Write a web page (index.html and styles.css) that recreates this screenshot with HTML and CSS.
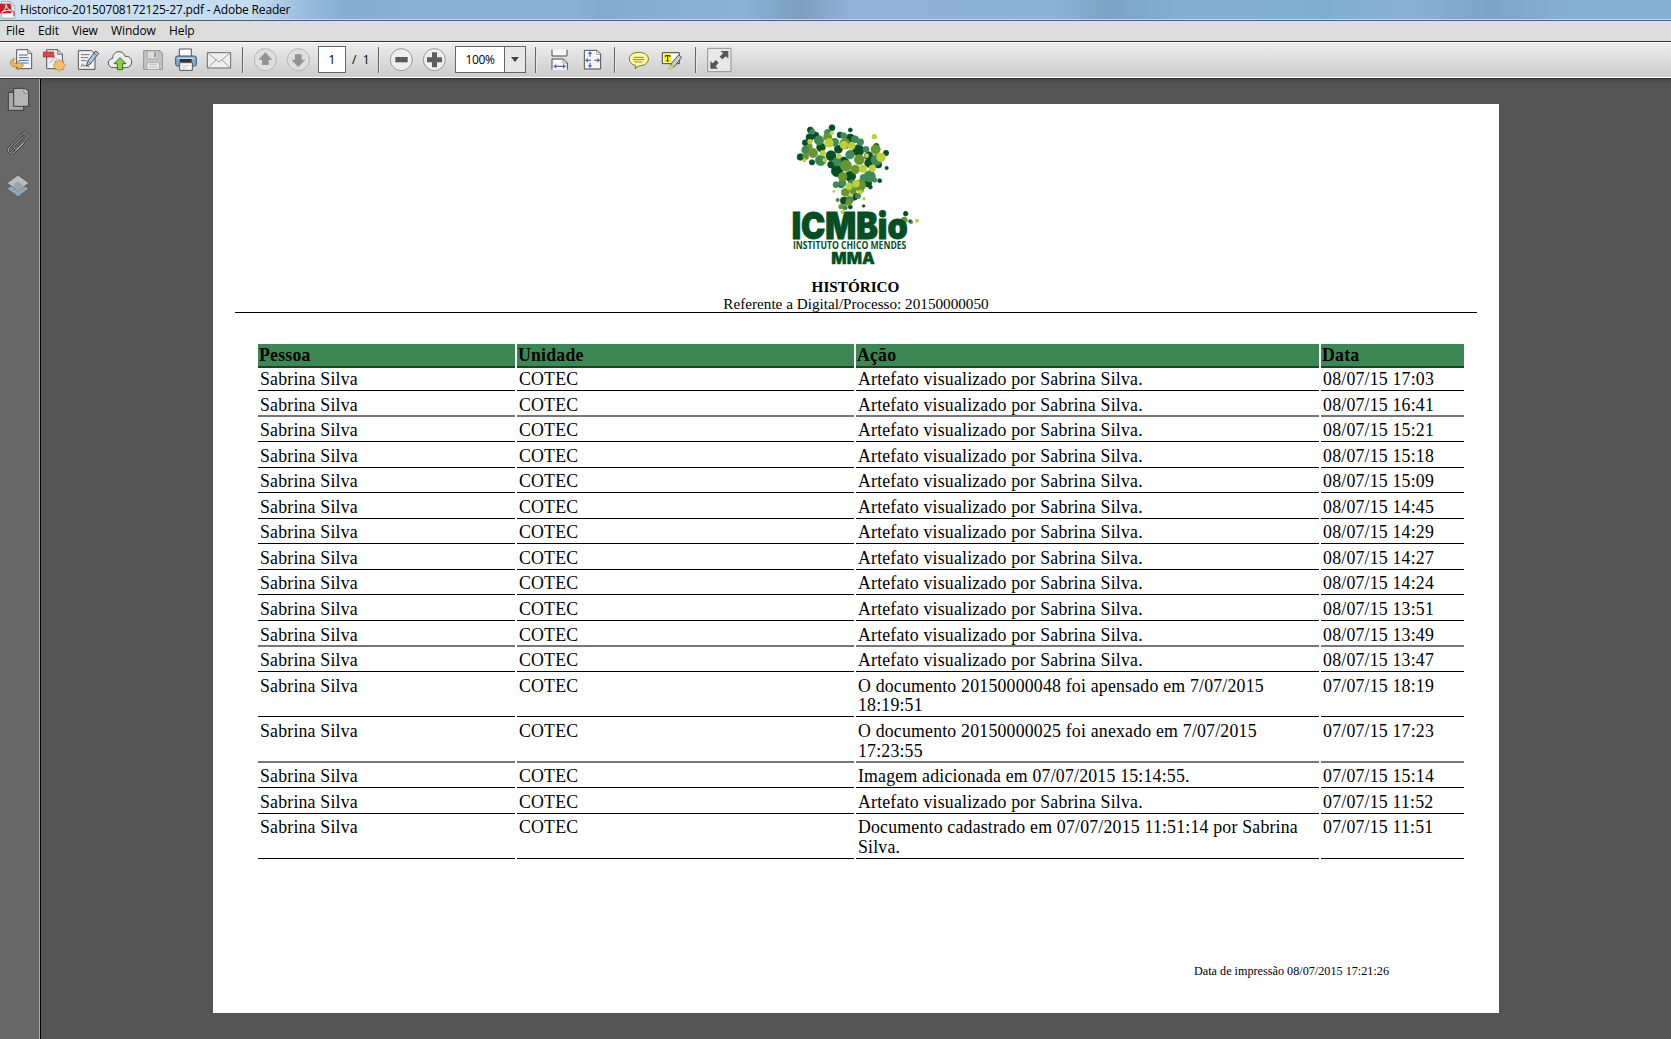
FILE: index.html
```html
<!DOCTYPE html>
<html lang="pt-BR">
<head>
<meta charset="utf-8">
<title>Historico-20150708172125-27.pdf - Adobe Reader</title>
<link rel="stylesheet" href="styles.css">
</head>
<body>
<header class="titlebar">
  <svg class="app-icon" width="16" height="18" viewBox="0 0 48 54"><path d="M4 2h28l12 12v38H4z" fill="#f6f2f2" stroke="#8b8b8b" stroke-width="2"/><path d="M0 8h34v29H0z" fill="#c4202a"/><path d="M32 2v12h12z" fill="#ddd" stroke="#888"/><path d="M5 34c9-4 14-14 13-23 3 11 9 17 17 18-12-2-22 0-30 5z" fill="none" stroke="#fff" stroke-width="3"/><path d="M34 28l8 5v12" fill="none" stroke="#c4202a" stroke-width="3"/></svg>
  <span class="title-text">Historico-20150708172125-27.pdf - Adobe Reader</span>
</header>
<nav class="menubar"><span class="m1">File</span><span class="m2">Edit</span><span class="m3">View</span><span class="m4">Window</span><span class="m5">Help</span></nav>
<div class="toolbar">
  <svg class="icon" viewBox="12 138 99 84"><path d="M50 149h34l11 11v46H50z" fill="#f7f7f7" stroke="#555" stroke-width="3"/><path d="M83 149v12h12" fill="#ccc" stroke="#555" stroke-width="2"/><path d="M57 165h26M57 173h29M57 181h29M62 189h24" stroke="#2f6bb3" stroke-width="3"/><path d="M44 176c-16 0-18 22 0 25h10v9l17-14-17-13v8h-8c-8-1-9-7-2-15z" fill="#f3bd55" stroke="#a8702c" stroke-width="2"/></svg>
  <svg class="icon" viewBox="111 138 99 84"><path d="M140 149h34l13 13v44h-47z" fill="#eee" stroke="#555" stroke-width="3"/><path d="M173 149v14h14" fill="#ccc" stroke="#555" stroke-width="2"/><path d="M148 188c10-4 14-16 14-22 2 9 8 14 17 15" stroke="#aaa" stroke-width="3" fill="none"/><path d="M130 156h31v15h-31z" fill="#e2444c" stroke="#9f2229" stroke-width="2"/><path d="M178 179l5 6 8-2 0 8 6 5-6 5 0 8-8-1-5 6-5-6-8 1 0-8-6-5 6-5 0-8 8 2z" fill="#f4c267" stroke="#b5772b" stroke-width="2"/></svg>
  <svg class="icon" viewBox="210 138 99 84"><path d="M235 152h40l10 10v46h-50z" fill="#f1f1f1" stroke="#555" stroke-width="3"/><path d="M243 164h26M243 173h22M243 182h17" stroke="#777" stroke-width="3"/><path d="M243 201c4-12 7-12 7-2 8-3 10-2 18 1" fill="none" stroke="#444" stroke-width="2"/><path d="M259 198l4-14 24-31 9 7-25 32z" fill="#a9cbe4" stroke="#3e5263" stroke-width="3"/><path d="M264 184l8 7M282 160l8 7" stroke="#3e5263" stroke-width="2"/></svg>
  <svg class="icon" viewBox="309 138 99 84"><path d="M341 203c-10 0-16-5-16-14 0-8 6-13 13-14 0-12 8-20 19-20 10 0 16 6 18 14 12-1 20 6 20 17 0 10-7 17-17 17z" fill="#eee" stroke="#555" stroke-width="3"/><path d="M360 173l18 18h-10v18h-16v-18h-10z" fill="#82d147" stroke="#347518" stroke-width="3"/></svg>
  <svg class="icon" viewBox="408 138 99 84"><path d="M431 152h49l7 7v49h-56z" fill="#c4c4c4" stroke="#929292" stroke-width="3"/><path d="M442 153h32v24h-32z" fill="#dedede" stroke="#999" stroke-width="2"/><path d="M462 157h7v15h-7z" fill="#999"/><path d="M441 188h37v20h-37z" fill="#eee" stroke="#999" stroke-width="2"/><path d="M447 194h25M447 201h25" stroke="#aaa" stroke-width="2"/></svg>
  <svg class="icon" viewBox="507 138 99 84"><path d="M538 147h36v25h-36z" fill="#fafafa" stroke="#555" stroke-width="3"/><path d="M527 173q0-5 5-5h50q7 0 7 6v20q0 4-5 4h-52q-5 0-5-5z" fill="#7eaacb" stroke="#38566c" stroke-width="3"/><path d="M532 173h51v5h-51z" fill="#c2ddf0"/><path d="M539 177h36v9h-36z" fill="#333"/><path d="M539 188h38v23h-38z" fill="#fafafa" stroke="#555" stroke-width="3"/><path d="M546 197h23M546 204h15" stroke="#aaa" stroke-width="2"/></svg>
  <svg class="icon" viewBox="606 138 99 84"><path d="M622 158h70v46h-70z" fill="#eee" stroke="#6d6d6d" stroke-width="3"/><path d="M625 202l24-23M689 202l-24-23M624 160l33 26 33-26" fill="none" stroke="#777" stroke-width="2"/></svg>
  <i class="sep s1"></i>
  <svg class="icon" viewBox="747 138 99 84"><circle cx="796" cy="179" r="33" fill="#dfdfdf" stroke="#b5b5b5" stroke-width="3"/><path d="M796 157l21 22h-11v16h-20v-16h-11z" fill="#929292"/></svg>
  <svg class="icon" viewBox="846 138 99 84"><circle cx="895" cy="179" r="33" fill="#dfdfdf" stroke="#b5b5b5" stroke-width="3"/><path d="M895 201l21-22h-11v-16h-20v16h-11z" fill="#929292"/></svg>
  <span class="pagebox">1</span><span class="total">/&nbsp; 1</span>
  <i class="sep s2"></i>
  <svg class="icon" viewBox="45 138 99 84"><circle cx="94" cy="179" r="33" fill="#eee" stroke="#969696" stroke-width="3"/><path d="M76 171h37v16H76z" fill="#5c5c5c"/></svg>
  <svg class="icon" viewBox="144 138 99 84"><circle cx="193" cy="179" r="33" fill="#eee" stroke="#969696" stroke-width="3"/><path d="M186 157h15v15h15v15h-15v15h-15v-15h-15v-15h15z" fill="#5c5c5c"/></svg>
  <span class="zoom"><span>100%</span><b><svg width="8" height="5" viewBox="0 0 8 5"><path d="M0 0h8L4 5z" fill="#444"/></svg></b></span>
  <i class="sep s3"></i>
  <svg class="icon" viewBox="520 138 99 84"><path d="M547 149v19h45v-19" fill="#f8f8f8" stroke="#4d4d4d" stroke-width="3"/><path d="M547 209v-32h34l12 12v20" fill="#f8f8f8" stroke="#4d4d4d" stroke-width="3"/><path d="M580 177v12h12" fill="none" stroke="#777" stroke-width="2"/><path d="M551 199l9-7v5h20v-5l9 7-9 7v-5h-20v5z" fill="#4b6ab2"/></svg>
  <svg class="icon" viewBox="621 138 99 84"><path d="M646 151h38l11 11v45h-49z" fill="#f5f5f5" stroke="#4d4d4d" stroke-width="3"/><path d="M683 151v12h12" fill="none" stroke="#777" stroke-width="2"/><path d="M663 153l7 9h-5v8h-4v-8h-5zM663 205l7-9h-5v-8h-4v8h-5zM648 181l9-7v5h9v4h-9v5zM694 181l-9-7v5h-9v4h9v5z" fill="#5571b5"/></svg>
  <i class="sep s4"></i>
  <svg class="icon" viewBox="759 138 99 84"><path d="M809 157c17 0 29 8 29 20s-12 20-26 20l-14 8 2-9c-11-2-19-9-19-19 0-12 12-20 28-20z" fill="#ffffa0" stroke="#777026" stroke-width="3"/><path d="M794 172h30M792 179h34M796 186h24" stroke="#8c832c" stroke-width="3"/></svg>
  <svg class="icon" viewBox="858 138 99 84"><path d="M880 158h51v33h-51z" fill="#fafafa" stroke="#444" stroke-width="3"/><path d="M885 162h22v25h-22z" fill="#fff22d"/><path d="M889 167h14v4M889 171v-4M896 167v16M892 183h8" fill="none" stroke="#222" stroke-width="3"/><path d="M906 191l23-26 9 7-21 27-12 5z" fill="#c9c9c9" stroke="#555" stroke-width="3"/><path d="M896 206l9-11 10 5-8 7z" fill="#e5dc36" stroke="#888" stroke-width="1"/></svg>
  <i class="sep s5"></i>
  <svg class="icon" viewBox="1001 138 99 84"><path d="M1015 145h70v70h-70z" fill="#e8e8e8" stroke="#929292" stroke-width="3"/><path d="M1054 153h23v23l-7-7-11 9-8-8 10-10zM1046 206h-23v-23l7 7 10-10 8 8-9 11z" fill="#575757"/></svg>
</div>
<div class="workspace">
  <aside class="sidebar">
    <svg width="24" height="24" viewBox="18 52 72 72"><path d="M25 68h46v54H25z" fill="#aaa" stroke="#3c3c3c" stroke-width="3"/><path d="M41 56h34l11 11v43H41z" fill="#b5b5b5" stroke="#3c3c3c" stroke-width="3"/><path d="M72 57v13h13" fill="#ddd" stroke="#555" stroke-width="2"/></svg>
    <svg width="24" height="24" viewBox="18 181 72 72"><g fill="none" stroke-linecap="round"><path d="M70 219L45 243c-10 11-26 1-18-11l38-40c11-12 26-1 17 10L54 232c-7 7-17 0-11-8l26-26" stroke="#3c3c3c" stroke-width="7"/><path d="M70 219L45 243c-10 11-26 1-18-11l38-40c11-12 26-1 17 10L54 232c-7 7-17 0-11-8l26-26" stroke="#b4b4b4" stroke-width="3"/></g></svg>
    <svg width="24" height="24" viewBox="18 311 72 72"><path d="M54 330l33 25-33 25-33-25z" fill="#8fa5b7" stroke="#444" stroke-width="2"/><path d="M54 314l33 24-33 24-33-24z" fill="#bcbcbc" stroke="#444" stroke-width="2"/><path d="M54 331l18 16-18 14-18-14z" fill="#98a4a9" stroke="#c9cfd2"/></svg>
  </aside>
  <main class="canvas">
    <article class="page">
      <svg class="logo" width="170" height="165" viewBox="0 0 510 495">
        <g fill="#054f22" stroke="#054f22" stroke-width="2"><circle cx="186" cy="53" r="9"/><circle cx="121" cy="60" r="9"/><circle cx="136" cy="77" r="11"/><circle cx="119" cy="82" r="11"/><circle cx="241" cy="60" r="6"/><circle cx="210" cy="75" r="9"/><circle cx="241" cy="84" r="12"/><circle cx="106" cy="98" r="9"/><circle cx="153" cy="112" r="13"/><circle cx="91" cy="141" r="10"/><circle cx="126" cy="157" r="8"/><circle cx="183" cy="137" r="15"/><circle cx="205" cy="118" r="12"/><circle cx="265" cy="121" r="17"/><circle cx="296" cy="138" r="13"/><circle cx="348" cy="129" r="8"/><circle cx="221" cy="156" r="15"/><circle cx="183" cy="164" r="10"/><circle cx="201" cy="183" r="17"/><circle cx="241" cy="199" r="16"/><circle cx="325" cy="164" r="10"/><circle cx="296" cy="160" r="12"/><circle cx="293" cy="219" r="12"/><circle cx="301" cy="231" r="6"/><circle cx="214" cy="224" r="9"/><circle cx="329" cy="212" r="6"/><circle cx="252" cy="259" r="12"/><circle cx="222" cy="272" r="11"/><circle cx="241" cy="291" r="6"/><circle cx="281" cy="288" r="4"/><circle cx="350" cy="174" r="5"/><circle cx="319" cy="108" r="8"/><circle cx="407" cy="311" r="7"/><circle cx="421" cy="334" r="5"/></g>
        <g fill="#3f8958" stroke="#3f8958" stroke-width="2"><circle cx="173" cy="68" r="10"/><circle cx="147" cy="91" r="14"/><circle cx="194" cy="97" r="12"/><circle cx="127" cy="65" r="8"/><circle cx="221" cy="77" r="9"/><circle cx="255" cy="88" r="11"/><circle cx="271" cy="96" r="10"/><circle cx="288" cy="118" r="9"/><circle cx="152" cy="151" r="16"/><circle cx="107" cy="120" r="12"/><circle cx="240" cy="134" r="13"/><circle cx="319" cy="150" r="16"/><circle cx="299" cy="199" r="17"/><circle cx="281" cy="204" r="11"/><circle cx="217" cy="219" r="11"/><circle cx="198" cy="224" r="9"/><circle cx="246" cy="220" r="11"/><circle cx="239" cy="269" r="11"/><circle cx="264" cy="258" r="8"/><circle cx="203" cy="270" r="5"/><circle cx="225" cy="293" r="7"/><circle cx="314" cy="210" r="7"/><circle cx="201" cy="155" r="12"/><circle cx="424" cy="337" r="4"/></g>
        <g fill="#67962e" stroke="#67962e" stroke-width="2"><circle cx="173" cy="81" r="12"/><circle cx="225" cy="101" r="16"/><circle cx="129" cy="129" r="14"/><circle cx="119" cy="109" r="8"/><circle cx="317" cy="118" r="14"/><circle cx="268" cy="149" r="15"/><circle cx="228" cy="167" r="17"/><circle cx="256" cy="178" r="13"/><circle cx="218" cy="200" r="13"/><circle cx="270" cy="226" r="17"/><circle cx="226" cy="247" r="12"/><circle cx="249" cy="242" r="10"/><circle cx="272" cy="239" r="9"/><circle cx="107" cy="140" r="9"/><circle cx="236" cy="278" r="9"/><circle cx="213" cy="290" r="7"/><circle cx="403" cy="330" r="9"/></g>
        <g fill="#bfd036"><circle cx="177" cy="99" r="14"/><circle cx="222" cy="105" r="12"/><circle cx="313" cy="80" r="8"/><circle cx="245" cy="108" r="11"/><circle cx="333" cy="142" r="14"/><circle cx="158" cy="129" r="9"/><circle cx="207" cy="139" r="8"/><circle cx="120" cy="95" r="8"/><circle cx="185" cy="70" r="6"/><circle cx="279" cy="176" r="12"/><circle cx="307" cy="175" r="11"/><circle cx="237" cy="229" r="11"/><circle cx="258" cy="221" r="11"/><circle cx="244" cy="256" r="6"/><circle cx="271" cy="246" r="7"/><circle cx="282" cy="266" r="5"/><circle cx="217" cy="306" r="6"/><circle cx="164" cy="150" r="7"/><circle cx="191" cy="244" r="4"/><circle cx="103" cy="151" r="6"/><circle cx="441" cy="332" r="6"/><circle cx="290" cy="137" r="7"/></g>
        <g class="logo-text"><text x="65" y="388" font-size="110" textLength="348" lengthAdjust="spacingAndGlyphs" stroke-width="3">ICMBio</text><text x="69" y="418" font-size="29" textLength="340" lengthAdjust="spacingAndGlyphs" class="logo-sub">INSTITUTO CHICO MENDES</text><text x="184" y="461" font-size="49" textLength="130" lengthAdjust="spacingAndGlyphs" stroke-width="1">MMA</text></g>
      </svg>
      <h1>HISTÓRICO</h1>
      <p class="subject">Referente a Digital/Processo: 20150000050</p>
      <section class="table">
        <div class="row head"><b>Pessoa</b><b>Unidade</b><b>Ação</b><b>Data</b></div>
        <div class="row first"><span>Sabrina Silva</span><span>COTEC</span><span>Artefato visualizado por Sabrina Silva.</span><span>08/07/15 17:03</span></div>
        <div class="row soft"><span>Sabrina Silva</span><span>COTEC</span><span>Artefato visualizado por Sabrina Silva.</span><span>08/07/15 16:41</span></div>
        <div class="row"><span>Sabrina Silva</span><span>COTEC</span><span>Artefato visualizado por Sabrina Silva.</span><span>08/07/15 15:21</span></div>
        <div class="row"><span>Sabrina Silva</span><span>COTEC</span><span>Artefato visualizado por Sabrina Silva.</span><span>08/07/15 15:18</span></div>
        <div class="row"><span>Sabrina Silva</span><span>COTEC</span><span>Artefato visualizado por Sabrina Silva.</span><span>08/07/15 15:09</span></div>
        <div class="row"><span>Sabrina Silva</span><span>COTEC</span><span>Artefato visualizado por Sabrina Silva.</span><span>08/07/15 14:45</span></div>
        <div class="row"><span>Sabrina Silva</span><span>COTEC</span><span>Artefato visualizado por Sabrina Silva.</span><span>08/07/15 14:29</span></div>
        <div class="row"><span>Sabrina Silva</span><span>COTEC</span><span>Artefato visualizado por Sabrina Silva.</span><span>08/07/15 14:27</span></div>
        <div class="row"><span>Sabrina Silva</span><span>COTEC</span><span>Artefato visualizado por Sabrina Silva.</span><span>08/07/15 14:24</span></div>
        <div class="row"><span>Sabrina Silva</span><span>COTEC</span><span>Artefato visualizado por Sabrina Silva.</span><span>08/07/15 13:51</span></div>
        <div class="row soft"><span>Sabrina Silva</span><span>COTEC</span><span>Artefato visualizado por Sabrina Silva.</span><span>08/07/15 13:49</span></div>
        <div class="row"><span>Sabrina Silva</span><span>COTEC</span><span>Artefato visualizado por Sabrina Silva.</span><span>08/07/15 13:47</span></div>
        <div class="row tall"><span>Sabrina Silva</span><span>COTEC</span><span>O documento 20150000048 foi apensado em 7/07/2015<br>18:19:51</span><span>07/07/15 18:19</span></div>
        <div class="row tall soft"><span>Sabrina Silva</span><span>COTEC</span><span>O documento 20150000025 foi anexado em 7/07/2015<br>17:23:55</span><span>07/07/15 17:23</span></div>
        <div class="row"><span>Sabrina Silva</span><span>COTEC</span><span>Imagem adicionada em 07/07/2015 15:14:55.</span><span>07/07/15 15:14</span></div>
        <div class="row"><span>Sabrina Silva</span><span>COTEC</span><span>Artefato visualizado por Sabrina Silva.</span><span>07/07/15 11:52</span></div>
        <div class="row tall"><span>Sabrina Silva</span><span>COTEC</span><span>Documento cadastrado em 07/07/2015 11:51:14 por Sabrina<br>Silva.</span><span>07/07/15 11:51</span></div>
      </section>
      <footer>Data de impressão 08/07/2015 17:21:26</footer>
    </article>
  </main>
</div>
</body>
</html>
```
FILE: styles.css
```css
* { box-sizing: border-box; }
body { margin: 0; height: 1039px; overflow: hidden; display: flex; flex-direction: column; background: #555; font-family: "Open Sans", "Noto Sans", sans-serif; font-size: 12px; color: #000; }
svg { display: block; flex: none; }

.titlebar { height: 21px; flex: none; display: flex; align-items: center; border-bottom: 1px solid #46647c; box-shadow: inset 0 -1px #c0dbe9; background: linear-gradient(90deg, #cfe3f4 0, #c5dcf0 250px, #9cbfe0 300px, #86acd0 345px, #8bb0d3 420px, #8db1d4 560px, #84abcd 600px, #8db2d4 740px, #7c9fbd 800px, #90b3d6 850px, #8fb3d5 1050px, #7da4c3 1110px, #84aed0 1180px, #82aece 1330px, #8bb0d2 1410px, #7fa5c6 1490px, #87afd0 1570px, #86afd1); }
.app-icon { margin-top: -1px; }
.title-text { margin-left: 4px; white-space: nowrap; line-height: 19px; letter-spacing: -.18px; margin-top: -1px; }

.menubar { height: 20px; flex: none; display: flex; background: #ddd; line-height: 20px; padding-left: 6px; letter-spacing: -.1px; }
.menubar span { flex: none; }
.m1 { width: 32px; }
.m2 { width: 34px; }
.m3 { width: 39px; }
.m4 { width: 58px; }

.toolbar { height: 38px; flex: none; display: flex; align-items: center; padding: 0 0 1px 4px; border-top: 1px solid #303030; border-bottom: 1px solid #303030; background: linear-gradient(#eee, #cbcbcb); box-shadow: inset 0 1px #fff, inset 0 -1px #fff; }
.icon { width: 33px; height: 28px; }
.sep { width: 2px; height: 26px; flex: none; background: #666; border-right: 1px solid #e8e8e8; }
.s1 { margin: 0 5px 0 7px; }
.s2 { margin: 0 5px 0 8px; }
.s3 { margin: 0 6px 0 9px; }
.s4 { margin: 0 6px 0 5px; }
.s5 { margin: 0 6px 0 7px; }
.pagebox { margin-left: 3px; width: 28px; height: 27px; flex: none; border: 1px solid #666; background: #fff; text-align: center; line-height: 25px; }
.total { width: 24px; flex: none; padding-left: 6px; white-space: nowrap; }
.zoom { margin-left: 4px; width: 71px; height: 27px; flex: none; display: flex; border: 1px solid #666; background: #fff; line-height: 25px; }
.zoom > span { width: 48px; text-align: center; letter-spacing: -.4px; }
.zoom b { width: 21px; display: flex; align-items: center; justify-content: center; border-left: 1px solid #666; background: #e8e8e8; }

.workspace { flex: 1; display: flex; min-height: 0; }
.sidebar { width: 41px; flex: none; display: flex; flex-direction: column; gap: 19.5px; padding: 8px 0 0 6px; background: #676767; border-right: 1px solid #000; box-shadow: inset -1px 0 #aaa; }
.canvas { flex: 1; padding: 25px 0 0 172px; background: linear-gradient(#484848, #555 6px); }

.page { width: 1286px; height: 909px; display: flex; flex-direction: column; background: #fff; font-family: "Liberation Serif", "Times New Roman", serif; }
.logo { margin: 6px 0 0 557px; }
.logo-text { font-family: Inter, sans-serif; font-weight: 900; fill: #054f22; stroke: #054f22; stroke-width: 0; }
.logo-sub { font-family: "Open Sans", sans-serif; font-weight: 700; }
h1 { margin: 3px 23px 0 22px; font-size: 15.2px; line-height: 17px; text-align: center; }
.subject { margin: 0 22px; height: 18px; font-size: 15.2px; line-height: 17px; text-align: center; border-bottom: 1px solid #000; }

.table { margin: 31px 0 0 45px; font-size: 17.8px; line-height: 19.7px; letter-spacing: .2px; }
.row { display: grid; grid-template-columns: 257.4px 337.4px 463.5px 143px; column-gap: 1.6px; height: 25.55px; }
.row span { padding: 4.6px 0 0 2px; border-bottom: 1px solid #000; white-space: nowrap; }
.row b { padding: 2px 0 0 1px; background: #3b8852; border-bottom: 2px solid #1f4029; }
.row.head { height: 22px; }
.row.first { height: 25px; }
.row.first span { padding-top: 4px; }
.row.tall { height: 45.35px; }
.row.soft span { border-bottom: 2px solid #777; }

footer { margin: 105px 0 0 981px; font-size: 12.2px; line-height: 14px; }
```
